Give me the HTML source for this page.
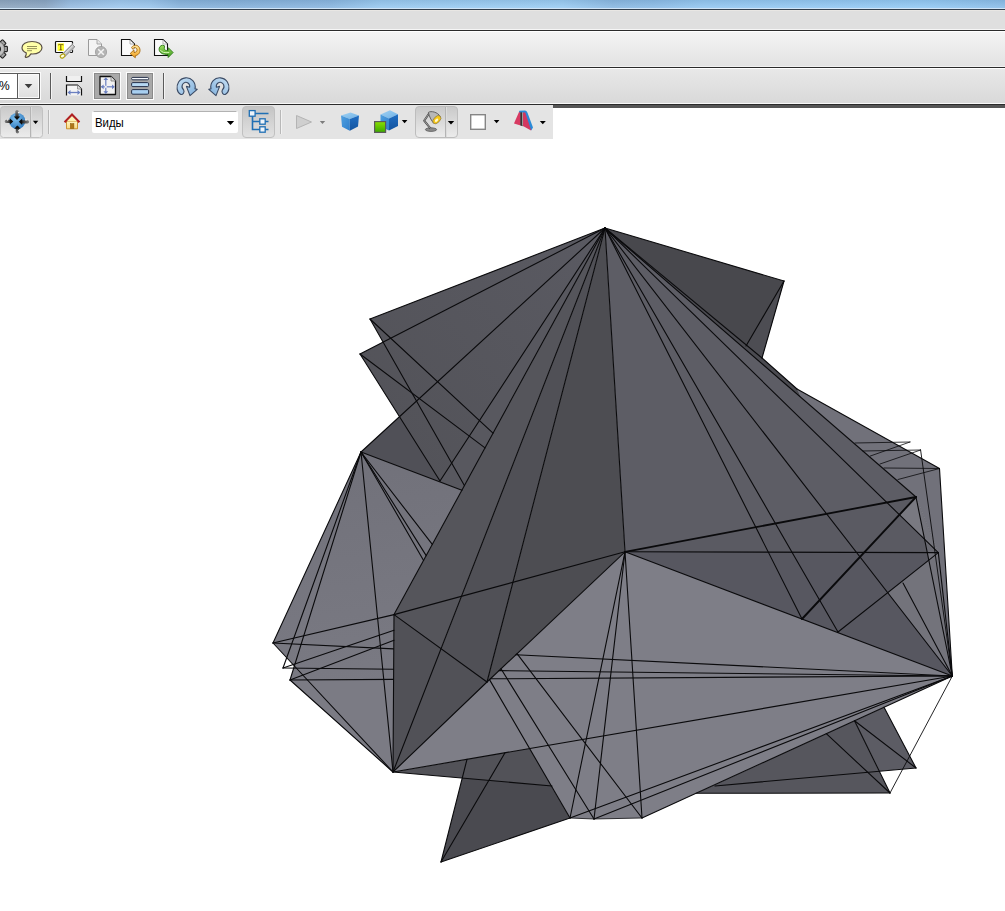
<!DOCTYPE html>
<html><head><meta charset="utf-8"><title>3D PDF</title>
<style>
html,body{margin:0;padding:0;background:#fff;}
body{width:1005px;height:911px;overflow:hidden;position:relative;font-family:"Liberation Sans",sans-serif;}
.abs{position:absolute;left:0;}
#title{top:0;width:1005px;height:8px;background:linear-gradient(rgba(40,60,80,0.10),rgba(255,255,255,0.10)),linear-gradient(90deg,#8ea6bf 0,#8aa5c2 4.5%,#98bde2 7%,#9fc9ef 12%,#9bc6ed 15%,#88b4dd 18%,#85b1db 23%,#8ab7e1 33%,#99caf1 38%,#9bcdf4 56%,#8ab9e3 61%,#8bbce7 65%,#94c8f2 70%,#93caf5 92%,#8bbee9 100%);}
#t1{top:8px;width:1005px;height:1px;background:#cfe4f7;}
#t2{top:9px;width:1005px;height:1px;background:#34414f;}
#menu{top:10px;width:1005px;height:19px;background:#dfdfdf;border-top:1px solid #e9e7e4;box-sizing:border-box;}
#m1{top:29px;width:1005px;height:1px;background:#f6f6f6;}
#m2{top:30px;width:1005px;height:1px;background:#2b2b2b;}
#row1{top:31px;width:1005px;height:36px;background:linear-gradient(#f4f4f4,#e3e3e3);border-top:1px solid #fff;border-bottom:1px solid #f2f2f2;box-sizing:border-box;}
#r1{top:67px;width:1005px;height:1px;background:#2b2b2b;}
#row2{top:68px;width:1005px;height:36px;background:linear-gradient(#e8e8e8,#d9d9d9);border-top:1px solid #fff;border-bottom:1px solid #f8f8f8;box-sizing:border-box;}
#r2{top:104px;width:1005px;height:1px;background:#2b2b2b;}
#r3{top:105px;left:553px;width:452px;height:3px;background:#555;}
#tb3{top:105px;width:553px;height:34px;background:#e4e4e4;}
svg.icons{position:absolute;left:0;top:0;}
svg.model{position:absolute;left:0;top:0;}
.txt{position:absolute;font-size:12px;color:#000;line-height:14px;white-space:nowrap;}
</style></head><body>
<div class="abs" id="title"></div><div class="abs" id="t1"></div><div class="abs" id="t2"></div>
<div class="abs" id="menu"></div><div class="abs" id="m1"></div><div class="abs" id="m2"></div>
<div class="abs" id="row1"></div><div class="abs" id="r1"></div>
<div class="abs" id="row2"></div><div class="abs" id="r2"></div><div class="abs" id="r3"></div>
<div class="abs" id="tb3"></div>
<svg class="model" width="1005" height="911" viewBox="0 0 1005 911">
<defs><linearGradient id="gLeft" gradientUnits="userSpaceOnUse" x1="340" y1="452" x2="380" y2="772"><stop offset="0" stop-color="#71717a"/><stop offset="1" stop-color="#7d7d86"/></linearGradient><linearGradient id="gConeL" gradientUnits="userSpaceOnUse" x1="380" y1="420" x2="600" y2="240"><stop offset="0" stop-color="#535359"/><stop offset="1" stop-color="#5a5a62"/></linearGradient></defs>
<g stroke="none">
<polygon points="696,793.3 890,793 854.5,720.8" fill="#56565d"/>
<polygon points="854.5,720.8 879.3,771.3 916,768 884,707.3" fill="#5c5c64"/>
<polygon points="467,759.3 441,862 570,818 529.6,748.6" fill="#4a4a50"/>
<polygon points="393,772 552,786 529.6,748.6" fill="#525258"/>
<polygon points="361,452 273,643 294.4,666.0 290,680 393,772 394,614.6 461.9,490.2" fill="url(#gLeft)"/>
<polygon points="290,680 393,772 393.5,679.4" fill="#7b7b84"/>
<polygon points="393,772 487,682 625,551.8 952.3,676 642,818 594,819 570,818 529.6,748.6" fill="#7e7e87"/>
<polygon points="797,389 939.5,468.5 952.3,676 938.3,552.6 916,497 801,397.5" fill="#71717a"/>
<polygon points="605,228 762,358 797,389 801,397.5 916,497 938.3,552.6 952.3,676 625,551.8" fill="#5d5d65"/>
<polygon points="605,228 762,358 797,389 801,397.5" fill="#4a4a50"/>
<polygon points="625,551.8 916,497 938.3,552.6" fill="#5a5a62"/>
<polygon points="625,551.8 938.3,552.6 952.3,676" fill="#575760"/>
<polygon points="916,497 928.8,560.1 887.7,592.7 952.3,676 938.3,552.6" fill="#73737b"/>
<polygon points="916,497 899.4,514.7 924.6,539.2" fill="#797981"/>
<polygon points="924.6,539.2 938.3,552.6 927.3,552.6" fill="#686870"/>
<polygon points="605,228 784,281 762,358" fill="#48484d"/>
<polygon points="784,281 746,346 762,358" fill="#4d4d53"/>
<polygon points="605,228 370,319 383.1,342.1 360,354 399.5,416.7 361,452 461.9,490.2" fill="url(#gConeL)"/>
<polygon points="360,354 399.5,416.7 361,452 461.9,490.2 440,481" fill="#505057"/>
<polygon points="605,228 440,481 461.9,490.2" fill="#58585f"/>
<polygon points="605,228 394,614.6 393,772" fill="#55555b"/>
<polygon points="605,228 393,772 487,682" fill="#505056"/>
<polygon points="605,228 487,682 625,551.8" fill="#4d4d52"/>
<polygon points="394,614.6 393,772 487,682" fill="#515157"/>
</g>
<g fill="none" stroke-linecap="round">
<line x1="605" y1="228" x2="370" y2="319" stroke="#0a0a0c" stroke-width="1.1"/>
<line x1="605" y1="228" x2="360" y2="354" stroke="#0a0a0c" stroke-width="1.1"/>
<line x1="605" y1="228" x2="361" y2="452" stroke="#0a0a0c" stroke-width="1.1"/>
<line x1="605" y1="228" x2="440" y2="481" stroke="#0a0a0c" stroke-width="1.1"/>
<line x1="605" y1="228" x2="394" y2="614.6" stroke="#0a0a0c" stroke-width="1.1"/>
<line x1="605" y1="228" x2="393" y2="772" stroke="#0a0a0c" stroke-width="1.1"/>
<line x1="605" y1="228" x2="487" y2="682" stroke="#0a0a0c" stroke-width="1.1"/>
<line x1="605" y1="228" x2="625" y2="551.8" stroke="#0a0a0c" stroke-width="1.1"/>
<line x1="605" y1="228" x2="802" y2="619" stroke="#0a0a0c" stroke-width="1.1"/>
<line x1="605" y1="228" x2="838" y2="632" stroke="#0a0a0c" stroke-width="1.1"/>
<line x1="605" y1="228" x2="952.3" y2="676" stroke="#0a0a0c" stroke-width="1.1"/>
<line x1="605" y1="228" x2="938.3" y2="552.6" stroke="#0a0a0c" stroke-width="1.1"/>
<line x1="605" y1="228" x2="916" y2="497" stroke="#0a0a0c" stroke-width="1.1"/>
<line x1="605" y1="228" x2="784" y2="281" stroke="#0a0a0c" stroke-width="1.1"/>
<line x1="605" y1="228" x2="762" y2="358" stroke="#0a0a0c" stroke-width="1.1"/>
<line x1="762" y1="358" x2="797" y2="389" stroke="#0a0a0c" stroke-width="1.1"/>
<line x1="797" y1="389" x2="939.5" y2="468.5" stroke="#0a0a0c" stroke-width="1.1"/>
<line x1="939.5" y1="468.5" x2="952.3" y2="676" stroke="#0a0a0c" stroke-width="1.1"/>
<line x1="784" y1="281" x2="762" y2="358" stroke="#0a0a0c" stroke-width="1.1"/>
<line x1="784" y1="281" x2="746" y2="346" stroke="#0a0a0c" stroke-width="1.1"/>
<line x1="370" y1="319" x2="493" y2="433.2" stroke="#0a0a0c" stroke-width="1.1"/>
<line x1="370" y1="319" x2="464.4" y2="485.6" stroke="#0a0a0c" stroke-width="1.1"/>
<line x1="360" y1="354" x2="485" y2="447.9" stroke="#0a0a0c" stroke-width="1.1"/>
<line x1="360" y1="354" x2="440" y2="481" stroke="#0a0a0c" stroke-width="1.1"/>
<line x1="361" y1="452" x2="461.9" y2="490.2" stroke="#0a0a0c" stroke-width="1.1"/>
<line x1="361" y1="452" x2="273" y2="643" stroke="#0a0a0c" stroke-width="1.1"/>
<line x1="361" y1="452" x2="283" y2="668" stroke="#0a0a0c" stroke-width="1.1"/>
<line x1="361" y1="452" x2="290" y2="680" stroke="#0a0a0c" stroke-width="1.1"/>
<line x1="361" y1="452" x2="393" y2="772" stroke="#0a0a0c" stroke-width="1.1"/>
<line x1="361" y1="452" x2="426.2" y2="555.6" stroke="#0a0a0c" stroke-width="1.1"/>
<line x1="361" y1="452" x2="432.3" y2="544.4" stroke="#0a0a0c" stroke-width="1.1"/>
<line x1="361" y1="452" x2="423.6" y2="560.4" stroke="#0a0a0c" stroke-width="1.1"/>
<line x1="273" y1="643" x2="394" y2="614.6" stroke="#0a0a0c" stroke-width="1.1"/>
<line x1="394" y1="614.6" x2="625" y2="551.8" stroke="#0a0a0c" stroke-width="1.1"/>
<line x1="283" y1="668" x2="394" y2="630.3" stroke="#0a0a0c" stroke-width="1.1"/>
<line x1="290" y1="680" x2="394" y2="640.2" stroke="#0a0a0c" stroke-width="1.1"/>
<line x1="273" y1="643" x2="393.5" y2="648.9" stroke="#0a0a0c" stroke-width="1.1"/>
<line x1="283" y1="668" x2="393.5" y2="669.3" stroke="#0a0a0c" stroke-width="1.1"/>
<line x1="290" y1="680" x2="393.5" y2="679.4" stroke="#0a0a0c" stroke-width="1.1"/>
<line x1="515.8" y1="654.8" x2="952.3" y2="676" stroke="#0a0a0c" stroke-width="1.1"/>
<line x1="499.1" y1="670.6" x2="952.3" y2="676" stroke="#0a0a0c" stroke-width="1.1"/>
<line x1="490.4" y1="678.8" x2="952.3" y2="676" stroke="#0a0a0c" stroke-width="1.1"/>
<line x1="393" y1="772" x2="394" y2="614.6" stroke="#0a0a0c" stroke-width="1.1"/>
<line x1="394" y1="614.6" x2="487" y2="682" stroke="#0a0a0c" stroke-width="1.1"/>
<line x1="393" y1="772" x2="487" y2="682" stroke="#0a0a0c" stroke-width="1.1"/>
<line x1="393" y1="772" x2="952.3" y2="676" stroke="#0a0a0c" stroke-width="1.1"/>
<line x1="393" y1="772" x2="273" y2="643" stroke="#0a0a0c" stroke-width="1.1"/>
<line x1="393" y1="772" x2="290" y2="680" stroke="#0a0a0c" stroke-width="1.1"/>
<line x1="487" y1="682" x2="625" y2="551.8" stroke="#0a0a0c" stroke-width="1.1"/>
<line x1="625" y1="551.8" x2="570" y2="818" stroke="#0a0a0c" stroke-width="1.1"/>
<line x1="625" y1="551.8" x2="594" y2="819" stroke="#0a0a0c" stroke-width="1.1"/>
<line x1="625" y1="551.8" x2="642" y2="818" stroke="#0a0a0c" stroke-width="1.1"/>
<line x1="570" y1="818" x2="952.3" y2="676" stroke="#0a0a0c" stroke-width="1.1"/>
<line x1="594" y1="819" x2="952.3" y2="676" stroke="#0a0a0c" stroke-width="1.1"/>
<line x1="642" y1="818" x2="952.3" y2="676" stroke="#0a0a0c" stroke-width="1.1"/>
<line x1="489.5" y1="679.6" x2="570" y2="818" stroke="#0a0a0c" stroke-width="1.1"/>
<line x1="501" y1="668.8" x2="594" y2="819" stroke="#0a0a0c" stroke-width="1.1"/>
<line x1="517" y1="653.7" x2="642" y2="818" stroke="#0a0a0c" stroke-width="1.1"/>
<line x1="570" y1="818" x2="594" y2="819" stroke="#0a0a0c" stroke-width="0.8"/>
<line x1="594" y1="819" x2="642" y2="818" stroke="#0a0a0c" stroke-width="0.8"/>
<line x1="441" y1="862" x2="467" y2="759.3" stroke="#0a0a0c" stroke-width="1.1"/>
<line x1="441" y1="862" x2="505" y2="752.8" stroke="#0a0a0c" stroke-width="1.1"/>
<line x1="441" y1="862" x2="570" y2="818" stroke="#0a0a0c" stroke-width="1.1"/>
<line x1="393" y1="772" x2="552" y2="786" stroke="#0a0a0c" stroke-width="1.1"/>
<line x1="625" y1="551.8" x2="916" y2="497" stroke="#0a0a0c" stroke-width="1.8"/>
<line x1="625" y1="551.8" x2="938.3" y2="552.6" stroke="#0a0a0c" stroke-width="1.1"/>
<line x1="625" y1="551.8" x2="952.3" y2="676" stroke="#0a0a0c" stroke-width="1.1"/>
<line x1="916" y1="497" x2="802" y2="619" stroke="#0a0a0c" stroke-width="1.9"/>
<line x1="938.3" y1="552.6" x2="838" y2="632" stroke="#0a0a0c" stroke-width="1.1"/>
<line x1="916" y1="497" x2="952.3" y2="676" stroke="#0a0a0c" stroke-width="1.1"/>
<line x1="938.3" y1="552.6" x2="952.3" y2="676" stroke="#0a0a0c" stroke-width="1.1"/>
<line x1="903" y1="583" x2="952.3" y2="676" stroke="#0a0a0c" stroke-width="1.1"/>
<line x1="855" y1="443" x2="910" y2="442" stroke="#0a0a0c" stroke-width="0.8"/>
<line x1="910" y1="442" x2="870.4" y2="456" stroke="#0a0a0c" stroke-width="0.8"/>
<line x1="863" y1="451" x2="920.6" y2="450" stroke="#0a0a0c" stroke-width="0.8"/>
<line x1="920.6" y1="450" x2="880" y2="464" stroke="#0a0a0c" stroke-width="0.8"/>
<line x1="920.6" y1="450" x2="952.3" y2="676" stroke="#0a0a0c" stroke-width="0.9"/>
<line x1="884" y1="468" x2="939.5" y2="468.5" stroke="#0a0a0c" stroke-width="0.8"/>
<line x1="939.5" y1="468.5" x2="898" y2="479.5" stroke="#0a0a0c" stroke-width="0.8"/>
<line x1="696" y1="793.3" x2="890" y2="793" stroke="#0a0a0c" stroke-width="1.1"/>
<line x1="715" y1="786" x2="916" y2="768" stroke="#0a0a0c" stroke-width="1.1"/>
<line x1="826.3" y1="733.7" x2="890" y2="793" stroke="#0a0a0c" stroke-width="1.1"/>
<line x1="854.5" y1="720.8" x2="890" y2="793" stroke="#0a0a0c" stroke-width="1.1"/>
<line x1="854.5" y1="720.8" x2="916" y2="768" stroke="#0a0a0c" stroke-width="1.1"/>
<line x1="916" y1="768" x2="884" y2="707.3" stroke="#0a0a0c" stroke-width="1.1"/>
<line x1="952.3" y1="676" x2="890" y2="793" stroke="#0a0a0c" stroke-width="0.9"/>
</g></svg>
<svg class="icons" width="1005" height="145" viewBox="0 0 1005 145">
<defs>
 <linearGradient id="gBtn" x1="0" y1="0" x2="0" y2="1"><stop offset="0" stop-color="#c9c9c9"/><stop offset="1" stop-color="#ececec"/></linearGradient>
 <linearGradient id="gBtnP" x1="0" y1="0" x2="0" y2="1"><stop offset="0" stop-color="#c4c4c4"/><stop offset="1" stop-color="#e2e2e2"/></linearGradient>
 <linearGradient id="gDD" x1="0" y1="0" x2="0" y2="1"><stop offset="0" stop-color="#f4f4f4"/><stop offset="1" stop-color="#dedede"/></linearGradient>
 <linearGradient id="gBlue" x1="0" y1="0" x2="1" y2="1"><stop offset="0" stop-color="#c8e0f4"/><stop offset="1" stop-color="#7fb0dc"/></linearGradient>
 <linearGradient id="gCubeTop" x1="0" y1="0" x2="1" y2="1"><stop offset="0" stop-color="#9fd0f2"/><stop offset="1" stop-color="#6fb2e6"/></linearGradient>
 <linearGradient id="gCubeL" x1="0" y1="0" x2="1" y2="1"><stop offset="0" stop-color="#4fa0e0"/><stop offset="1" stop-color="#2f7fcc"/></linearGradient>
 <linearGradient id="gCubeR" x1="0" y1="0" x2="0" y2="1"><stop offset="0" stop-color="#1f6ec4"/><stop offset="1" stop-color="#13539e"/></linearGradient>
 <linearGradient id="gGreen" x1="0" y1="0" x2="0" y2="1"><stop offset="0" stop-color="#8be000"/><stop offset="1" stop-color="#3aa800"/></linearGradient>
 <radialGradient id="gBall" cx="0.4" cy="0.35" r="0.7"><stop offset="0" stop-color="#7fc0ee"/><stop offset="1" stop-color="#2c78be"/></radialGradient>
 <linearGradient id="gOrange" x1="0" y1="0" x2="0" y2="1"><stop offset="0" stop-color="#ffe9a0"/><stop offset="1" stop-color="#f0a020"/></linearGradient>
 <linearGradient id="gGrn2" x1="0" y1="0" x2="0" y2="1"><stop offset="0" stop-color="#9ee060"/><stop offset="1" stop-color="#3f9a20"/></linearGradient>
 <linearGradient id="gRoof" x1="0" y1="0" x2="0" y2="1"><stop offset="0" stop-color="#fff6c0"/><stop offset="1" stop-color="#f8d880"/></linearGradient>
<linearGradient id="gTubeV" gradientUnits="userSpaceOnUse" x1="0" y1="110" x2="0" y2="118"><stop offset="0" stop-color="#8c8c8c"/><stop offset="1" stop-color="#1c1c1c"/></linearGradient>
 <linearGradient id="gTubeV2" gradientUnits="userSpaceOnUse" x1="0" y1="134" x2="0" y2="127"><stop offset="0" stop-color="#8c8c8c"/><stop offset="1" stop-color="#1c1c1c"/></linearGradient>
 <linearGradient id="gTubeH" gradientUnits="userSpaceOnUse" x1="4.500" y1="0" x2="11" y2="0"><stop offset="0" stop-color="#8c8c8c"/><stop offset="1" stop-color="#1c1c1c"/></linearGradient>
 <linearGradient id="gTubeH2" gradientUnits="userSpaceOnUse" x1="29.500" y1="0" x2="21" y2="0"><stop offset="0" stop-color="#8c8c8c"/><stop offset="1" stop-color="#1c1c1c"/></linearGradient>
</defs>

<!-- ===== ROW 1 ===== -->
<!-- gear (clipped at left) -->
<g transform="translate(-3.2,49)">
 <g fill="#a4a4a4" stroke="#222" stroke-width="1.1">
  <rect x="-2.6" y="-10.6" width="5.2" height="21.2" rx="0.8"/>
  <rect x="-2.6" y="-10.6" width="5.2" height="21.2" rx="0.8" transform="rotate(45)"/>
  <rect x="-2.6" y="-10.6" width="5.2" height="21.2" rx="0.8" transform="rotate(90)"/>
  <rect x="-2.6" y="-10.6" width="5.2" height="21.2" rx="0.8" transform="rotate(135)"/>
 </g>
 <circle r="7.9" fill="#b4b4b4" stroke="#2c2c2c" stroke-width="0.5"/>
 <circle r="6.6" fill="#c2c2c2"/>
 <circle r="3.4" fill="#dcdcdc" stroke="#2a2a2a" stroke-width="1.8"/>
</g>
<!-- speech bubble -->
<path d="M32 41.5 C38 41.5 42 44.3 42 47.8 C42 51.3 38 54 32.5 54 C32 54 31.5 54 31 53.9 C30 55.6 28.4 57 26.4 57.4 C25.4 57.5 25 56.9 25.5 56.2 C26.2 55.2 26.4 54 26.2 52.9 C23.7 51.8 22 50 22 47.8 C22 44.3 26 41.5 32 41.5 Z" fill="#ffffa8" stroke="#5a5046" stroke-width="1.2"/>
<g stroke="#8a8450" stroke-width="0.9"><line x1="27" y1="46.5" x2="37" y2="46.5"/><line x1="27" y1="48.6" x2="37" y2="48.6"/><line x1="27" y1="50.7" x2="32" y2="50.7"/></g>
<!-- T + pencil -->
<rect x="55.5" y="41.5" width="17" height="11" fill="#fff" stroke="#111" stroke-width="1.2" rx="0.8"/>
<rect x="57.5" y="43.3" width="6.5" height="7.6" fill="#ffff30"/>
<path d="M58.3 44.2 h5 v1.4 h-0.6 v-0.6 h-1.4 v4.6 h0.8 v0.7 h-2.6 v-0.7 h0.8 v-4.6 h-1.4 v0.6 h-0.6 z" fill="#6a4a10"/>
<g>
 <path d="M72.3 44.3 L74.8 46.8 L65.5 56 L62.8 53.8 Z" fill="#d8d8d8" stroke="#f4f4f4" stroke-width="1.4"/>
 <path d="M72.3 44.3 L74.8 46.8 L65.5 56 L62.8 53.8 Z" fill="#bcbcbc" stroke="#6a6a6a" stroke-width="0.8"/>
 <line x1="73" y1="45.4" x2="64" y2="54.4" stroke="#ececec" stroke-width="1"/>
 <ellipse cx="62.6" cy="56" rx="2.5" ry="1.8" fill="#fffde0" stroke="#b0a010" stroke-width="1.1" transform="rotate(-35 62.6 56)"/>
</g>
<!-- doc grey X -->
<path d="M88.5 39.5 h8.5 l4.5 4.5 v11.5 h-13 z" fill="#f4f4f4" stroke="#9a9a9a" stroke-width="1"/>
<path d="M97 39.5 v4.5 h4.5" fill="#e8e8e8" stroke="#9a9a9a" stroke-width="0.8"/>
<circle cx="101" cy="52" r="5.6" fill="#b4b4b4" stroke="#9a9a9a" stroke-width="0.8"/>
<path d="M98.2 49.2 L103.8 54.8 M103.8 49.2 L98.2 54.8" stroke="#f4f4f4" stroke-width="1.5"/>
<!-- doc orange arrow -->
<path d="M121.5 39.5 h8.5 l4.5 4.5 v11.5 h-13 z" fill="#fafafa" stroke="#111" stroke-width="1.1"/>
<path d="M130 40 v4 h4" fill="#fff" stroke="#a0a0a0" stroke-width="0.8"/>
<ellipse cx="135.3" cy="50.2" rx="1.9" ry="2.3" fill="#f2f2f2"/><path d="M131.6 47.6 C132.6 45.4 135.8 44.4 138 46 C140.6 48 140.6 52.2 138.4 54.2 C137.4 55.1 136.4 55.5 135.4 55.6 L135.3 57.7 L130.1 53.6 L133.9 49.9 L134.1 52.4 C135.7 52.5 137.1 51.6 137.1 50 C137.1 48.3 135.6 47.3 134.4 47.7 C133.4 48 133 48.6 132.9 49.3 Z" fill="url(#gOrange)" stroke="#a86a10" stroke-width="0.9" stroke-linejoin="round"/>
<!-- doc green arrow -->
<path d="M154.5 39.5 h8.5 l4.5 4.5 v11.5 h-13 z" fill="#fafafa" stroke="#111" stroke-width="1.1"/>
<path d="M163 40 v4 h4" fill="#fff" stroke="#a0a0a0" stroke-width="0.8"/>
<path d="M162.4 45.2 L164.5 45.8 L164.3 48.6 C164.4 50 165.6 50.7 168.2 50.6 L168.3 47.7 L173.1 52.5 L168.2 57.5 L168 54.5 C163 54.7 159.6 53.1 159.1 49.6 C158.9 47.2 160.4 45.6 162.4 45.2 Z" fill="url(#gGrn2)" stroke="#2f7a18" stroke-width="0.9" stroke-linejoin="round"/><path d="M160.6 50.4 C161.6 52.4 164.4 53 168.8 52.6" fill="none" stroke="#d8f6b8" stroke-width="1" stroke-linecap="round"/>

<!-- ===== ROW 2 ===== -->
<!-- zoom combo -->
<rect x="-3.5" y="72.5" width="44" height="27" fill="none" stroke="#fbfbfb" stroke-width="1"/>
<rect x="-3.5" y="73.5" width="43" height="25" fill="#fff" stroke="#5c5c5c" stroke-width="1"/>
<rect x="18" y="74" width="21" height="24" fill="url(#gDD)"/>
<rect x="18.5" y="74.5" width="20" height="23" fill="none" stroke="#fafafa" stroke-width="1"/>
<line x1="17.5" y1="73" x2="17.5" y2="99" stroke="#5c5c5c"/>
<path d="M24.7 84 h7.6 l-3.8 4.2 z" fill="#3c3c3c"/>
<!-- separators -->
<line x1="50.5" y1="73" x2="50.5" y2="99" stroke="#5a5a5a"/><line x1="51.5" y1="73" x2="51.5" y2="99" stroke="#f4f4f4"/>
<line x1="163.5" y1="73" x2="163.5" y2="99" stroke="#5a5a5a"/><line x1="164.5" y1="73" x2="164.5" y2="99" stroke="#f4f4f4"/>
<!-- fit width -->
<path d="M66.5 76 v5.5 h15 v-5.5" fill="#f0f0f0" stroke="#111" stroke-width="1.2"/>
<path d="M66.5 95.5 v-10.5 h11 l4 4 v6.5" fill="#f4f4f4" stroke="#111" stroke-width="1.2"/>
<path d="M77.5 85 v4 h4" fill="#ddd" stroke="#777" stroke-width="0.7"/>
<g stroke="#6a7fc0" stroke-width="1.3" fill="#6a7fc0"><line x1="69" y1="92.5" x2="79" y2="92.5"/><path d="M67.5 92.5 l3 -2.6 v5.2 z M80.5 92.5 l-3 -2.6 v5.2 z" stroke="none"/></g>
<!-- fit page (pressed) -->
<rect x="93.5" y="72.5" width="27" height="27" fill="none" stroke="#fcfcfc"/>
<rect x="94.5" y="73.5" width="25" height="25" fill="#a9a9a9" stroke="#8a8a8a"/>
<path d="M100 76.5 h11 l4.5 4.5 v13.5 h-15.5 z" fill="#f2f2f2" stroke="#111" stroke-width="1.3" stroke-linejoin="round"/>
<path d="M111 76.5 v4.5 h4.500" fill="#ddd" stroke="#666" stroke-width="0.7"/>
<g stroke="#6a7fc0" stroke-width="1.2" fill="#6a7fc0"><line x1="105.8" y1="79" x2="105.8" y2="92.5"/><line x1="101.5" y1="86.8" x2="114" y2="86.8"/>
<path d="M105.8 77.2 l2.4 2.8 h-4.8 z M105.8 94 l2.4 -2.8 h-4.8 z M100.8 86.800 l2.800 -2.400 v4.800 z M114.800 86.800 l-2.800 -2.400 v4.800 z" stroke="none"/></g>
<rect x="104.800" y="85.800" width="2" height="2" fill="#f2f2f2"/>
<!-- scrolling (pressed) -->
<rect x="126.5" y="72.5" width="27" height="27" fill="none" stroke="#fcfcfc"/>
<rect x="127.5" y="73.500" width="25" height="25" fill="#a9a9a9" stroke="#8a8a8a"/>
<rect x="131.600" y="77.400" width="17" height="2.400" rx="1.200" fill="#f8fbff" stroke="#27324a" stroke-width="1"/>
<rect x="131.600" y="82.600" width="17" height="4" rx="1.200" fill="#b6d8f2" stroke="#27324a" stroke-width="1"/>
<rect x="131.600" y="89.600" width="17" height="4.600" rx="1.200" fill="#a8cff0" stroke="#27324a" stroke-width="1"/>
<!-- rotate cw -->
<path id="rot" d="M180.800 94.500 C176.800 92.500 175.800 86.500 178.600 82 C181.800 77 189 76.400 192.800 80.600 C195 83 195.600 86 195 88.800 L197.200 89.400 L190 95.600 L186.400 86.400 L189.600 87.300 C190 85.600 189.400 84 188 83 C186 81.600 183.400 82.300 182.400 84.600 C181.600 86.600 182.200 88.600 183.600 89.800 C184.800 92 183 95 180.800 94.500 Z" fill="url(#gBlue)" stroke="#3a4a64" stroke-width="1.1" stroke-linejoin="round"/>
<use href="#rot" transform="translate(406,0) scale(-1,1)"/>

<!-- ===== ROW 3 (3D toolbar) ===== -->
<!-- pan button -->
<rect x="0.500" y="106.500" width="42" height="31" rx="3" fill="url(#gBtn)" stroke="#c2c2c2"/>
<line x1="30.500" y1="107" x2="30.500" y2="137" stroke="#b4b4b4"/><line x1="31.500" y1="107" x2="31.500" y2="137" stroke="#dcdcdc"/>
<circle cx="17.200" cy="121" r="8.100" fill="url(#gBall)"/>
<g stroke-linecap="round" stroke-width="3.300" fill="none">
 <line x1="17" y1="111.600" x2="17" y2="117" stroke="url(#gTubeV)"/>
 <line x1="17.400" y1="131.800" x2="17.400" y2="128" stroke="url(#gTubeV2)"/>
 <line x1="6.400" y1="121.400" x2="10.500" y2="121.400" stroke="url(#gTubeH)"/>
 <line x1="27.500" y1="121.800" x2="21.500" y2="121.800" stroke="url(#gTubeH2)"/>
</g>
<g fill="#0c0c0c"><path d="M13.800 116.400 h6.400 l-3.200 3.600 z"/><path d="M14.200 128.800 h6.400 l-3.200 -3.400 z"/><path d="M9.800 118.200 v6.400 l3.400 -3.200 z"/><path d="M22.200 118.600 v6.400 l-3.400 -3.200 z"/></g>
<g fill="#fff" opacity="0.85"><circle cx="18.600" cy="112.600" r="0.800"/><circle cx="7.600" cy="120" r="0.800"/><circle cx="18.800" cy="130.600" r="0.800"/><circle cx="26" cy="120" r="0.800"/></g>
<path d="M32.900 120.800 h5.400 l-2.700 3.200 z" fill="#000"/>
<!-- separators -->
<line x1="48.500" y1="110" x2="48.500" y2="134" stroke="#b8b8b8"/><line x1="49.500" y1="110" x2="49.500" y2="134" stroke="#f2f2f2"/>
<line x1="280.500" y1="110" x2="280.500" y2="134" stroke="#b8b8b8"/><line x1="281.500" y1="110" x2="281.500" y2="134" stroke="#f2f2f2"/>
<!-- home -->
<path d="M66.500 121.500 h11 v7.300 h-11 z" fill="url(#gRoof)" stroke="#c88a20" stroke-width="0.900"/>
<rect x="70.300" y="123.600" width="3.600" height="5" fill="#b07818" stroke="#8a5a10" stroke-width="0.500"/>
<path d="M64.600 122.200 L72 114.600 L79.400 122.200" fill="none" stroke="#b02020" stroke-width="2.200" stroke-linejoin="miter"/>
<path d="M66.800 121.600 L72 116.400 L77.200 121.600 Z" fill="#fff2b0"/>
<!-- select -->
<rect x="92" y="111" width="146" height="22" rx="2" fill="#fff"/>
<path d="M93.500 111.500 h143" stroke="#b2b2b2" stroke-width="1"/>
<path d="M226.800 121 h7.400 l-3.700 4 z" fill="#000"/>
<!-- tree button (pressed) -->
<rect x="242.500" y="106.500" width="32" height="31" rx="3.500" fill="url(#gBtnP)" stroke="#c0c0c0"/>
<g stroke="#1f6fb4" stroke-width="1.600" fill="none"><path d="M254 113.500 h14.500 M252.500 116 v13.500 h10 M252.500 121.500 h10 M265 121.500 h3.500 M265 129.500 h3.500"/></g>
<g fill="#eef4fa" stroke="#1f6fb4" stroke-width="1.300"><rect x="249.300" y="110.600" width="5.800" height="5.600"/><rect x="259.800" y="118.800" width="5.400" height="5.400"/><rect x="259.800" y="126.800" width="5.400" height="5.400"/></g>
<!-- play (disabled) -->
<path d="M296.500 115.500 L311.500 122 L296.500 128.500 Z" fill="#cfcfcf" stroke="#b4b4b4" stroke-width="1"/>
<path d="M319.800 121 h5.400 l-2.700 3 z" fill="#7c7c7c"/>
<!-- blue cube -->
<g><path d="M341 115.600 L350.500 112.600 L359 115.600 L349.800 119 Z" fill="url(#gCubeTop)"/><path d="M341 115.600 L349.800 119 L349.800 130.800 L342 126.800 Z" fill="url(#gCubeL)"/><path d="M359 115.600 L349.800 119 L349.800 130.800 L358 126.400 Z" fill="url(#gCubeR)"/></g>
<!-- cubes -->
<g><path d="M380.500 114.600 L390 110.200 L398 114.200 L389 118.600 Z" fill="url(#gCubeTop)"/><path d="M380.500 114.600 L389 118.600 L389 130.400 L380.500 126.400 Z" fill="url(#gCubeL)"/><path d="M398 114.200 L389 118.600 L389 130.400 L398 126 Z" fill="url(#gCubeR)"/>
<rect x="374.600" y="121.600" width="11" height="10.800" fill="url(#gGreen)" stroke="#5a5a5a" stroke-width="1.200"/></g>
<path d="M401.800 120 h5.600 l-2.800 3.200 z" fill="#000"/>
<!-- lamp button -->
<rect x="415.500" y="106.500" width="42" height="31" rx="3.500" fill="url(#gBtn)" stroke="#bdbdbd"/>
<line x1="445.500" y1="107" x2="445.500" y2="137" stroke="#b4b4b4"/><line x1="446.500" y1="107" x2="446.500" y2="137" stroke="#dcdcdc"/>
<g><ellipse cx="431" cy="129.600" rx="5.600" ry="1.800" fill="#8a8a8a" stroke="#5a5a5a" stroke-width="0.800"/>
<path d="M430.600 128.600 L424.200 120.600 L429.200 113.200" fill="none" stroke="#4a4a4a" stroke-width="2"/><path d="M430.600 128.600 L424.200 120.600 L429.200 113.200" fill="none" stroke="#b0b0b0" stroke-width="0.800"/>
<path d="M428.400 112.400 C431 110.600 437.500 112 440.200 116.400 L433.600 123.200 C431.200 120.400 429 116 428.400 112.400 Z" fill="#b8b8b8" stroke="#555" stroke-width="0.900"/>
<ellipse cx="437" cy="119.600" rx="4.900" ry="3" transform="rotate(-46 437 119.800)" fill="#f6c818" stroke="#8a7a50" stroke-width="0.700"/><ellipse cx="436.600" cy="120.200" rx="2" ry="1.200" transform="rotate(-46 436.600 120.200)" fill="#fff8d0"/></g>
<path d="M447.800 121 h6.400 l-3.200 3.400 z" fill="#000"/>
<!-- white square -->
<rect x="470.700" y="114.700" width="14.600" height="14.600" fill="#fff" stroke="#858585" stroke-width="1.400"/>
<path d="M493.800 120 h5.600 l-2.800 3.200 z" fill="#000"/>
<!-- cross section -->
<g><path d="M514 123.400 L519.200 111.400 L520.600 111.400 L520.600 125.400 Z" fill="#d83a62"/><path d="M520.400 111.400 h2.800 v14.800 l-2.800 -0.800 z" fill="#1c1c1c"/><path d="M521.800 111.600 h1.400 v14.400 l-1.400 -0.400 z" fill="#9a9a9a"/>
<path d="M523 112 L526.400 112 L531.400 128.600 L531 130.400 L523 126 Z" fill="#d23860"/><path d="M519.400 110.800 L524.800 110.600 C526.400 110.800 527 111.600 527.600 113 L533 127.600 L531.200 130.400 L525.200 112.600 L519 112.200 Z" fill="#2a8ad8"/></g>
<path d="M539.800 121 h6 l-3 3.200 z" fill="#000"/>
</svg>

<div class="txt" style="left:-1px;top:79px;">%</div>
<div class="txt" style="left:95px;top:116px;transform:scaleX(0.95);transform-origin:0 0;">Виды</div>
</body></html>
